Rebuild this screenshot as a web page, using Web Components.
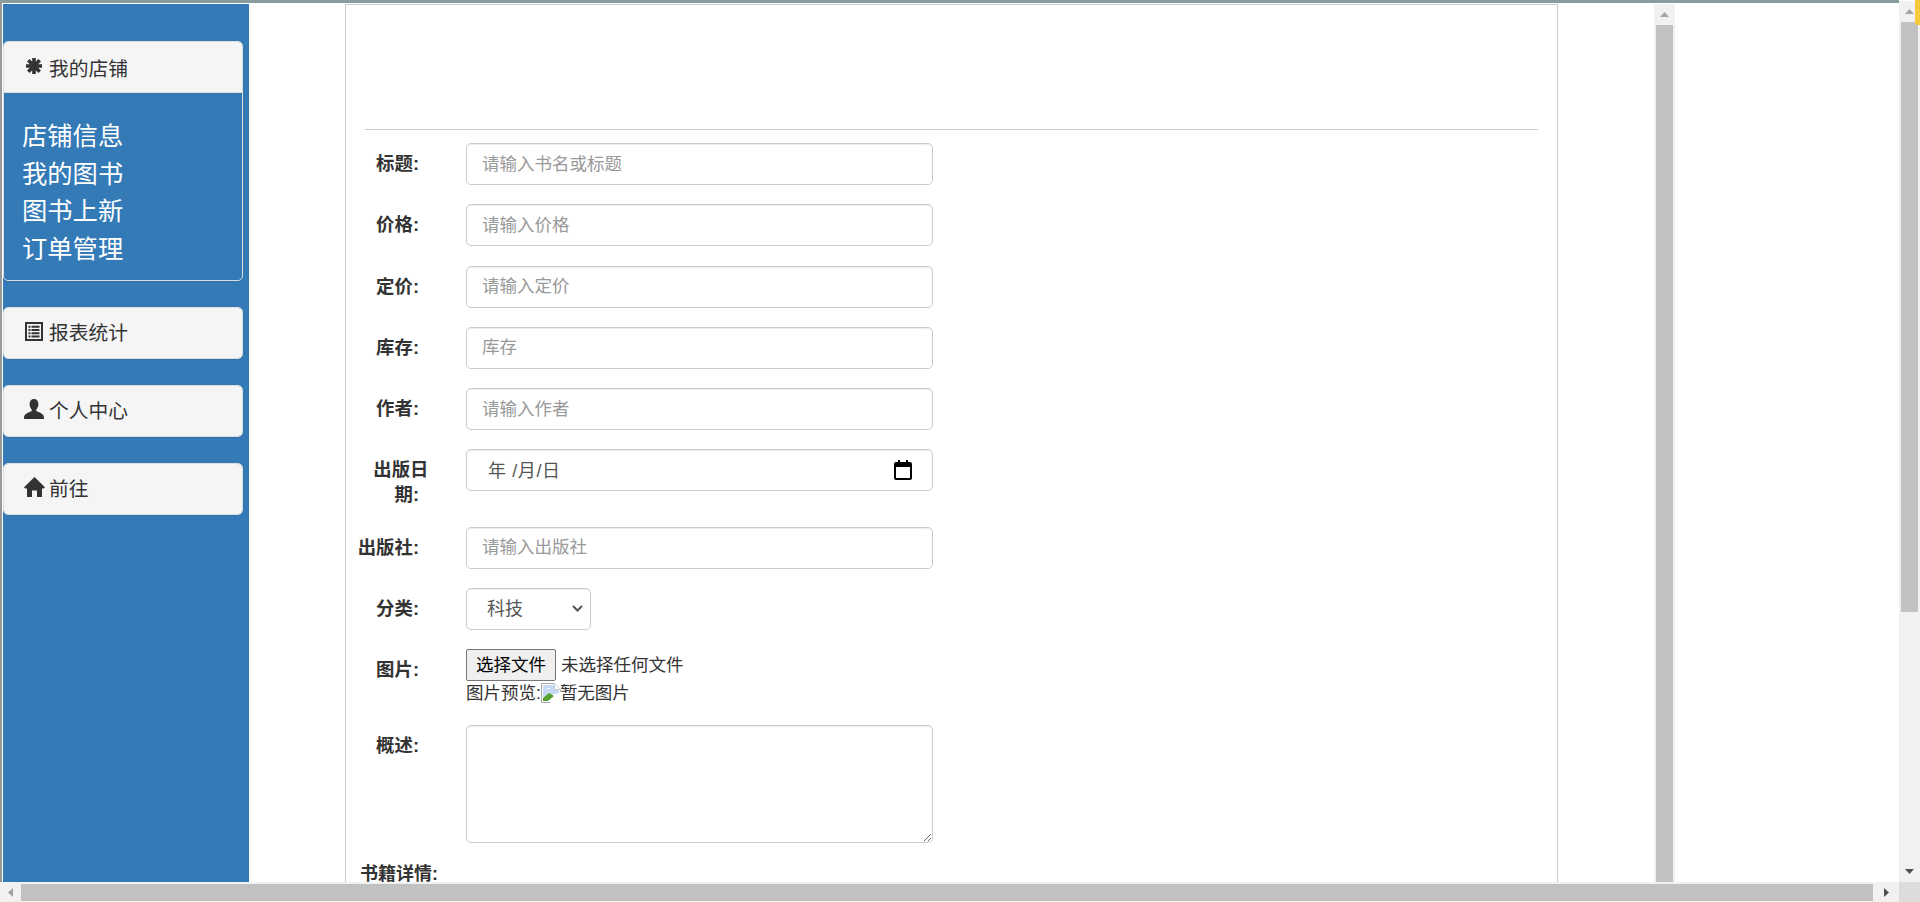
<!DOCTYPE html>
<html lang="zh-CN">
<head>
<meta charset="utf-8">
<title>图书上新</title>
<style>
  html, body { margin: 0; height: 100%; overflow: hidden; background: #fff; }
  body { font-family: "Liberation Sans", "Noto Sans CJK SC", sans-serif; color: #333; }
</style>
</head>
<body>
<shop-page>
  <side-nav slot="nav">
    <nav-card heading="我的店铺" icon="asterisk" open>
      <div>店铺信息</div>
      <div>我的图书</div>
      <div>图书上新</div>
      <div>订单管理</div>
    </nav-card>
    <nav-card heading="报表统计" icon="list"></nav-card>
    <nav-card heading="个人中心" icon="user"></nav-card>
    <nav-card heading="前往" icon="home"></nav-card>
  </side-nav>
  <book-form slot="panel"></book-form>
</shop-page>

<script>
const ICONS = {
  asterisk: `<svg viewBox="0 0 16 16" width="16" height="16"><g stroke="#333" stroke-width="3.600"><path d="M8 0v16M0 8h16M2.300 2.300l11.400 11.400M2.300 13.700L13.700 2.300"/></g></svg>`,
  list: `<svg viewBox="0 0 18 19" width="18" height="19"><path fill="#333" fill-rule="evenodd" d="M0 0h18v19H0zM2 2v15h14V2z"/><path fill="#333" d="M3.500 3.800h2v2h-2zM6.500 3.800h8v2h-8zM3.500 7h2v2h-2zM6.500 7h8v2h-8zM3.500 10.200h2v2h-2zM6.500 10.200h8v2h-8zM3.500 13.400h2v2h-2zM6.500 13.400h8v2h-8z"/></svg>`,
  user: `<svg viewBox="0 0 20 20" width="20" height="20"><path fill="#333" d="M10 0c2.800 0 4.400 2 4.400 5 0 2.300-.8 4.200-1.900 5.300-.5.5-.5 1.500.2 2 1.700 1 5.500 1.900 6.800 4.200.4.800.5 1.500.5 3.500H0c0-2 .1-2.700.5-3.500 1.300-2.300 5.100-3.200 6.800-4.200.7-.5.7-1.500.2-2C6.400 9.200 5.600 7.300 5.600 5 5.600 2 7.200 0 10 0z"/></svg>`,
  home: `<svg viewBox="0 0 21 20" width="21" height="20"><path fill="#333" d="M10.500 0l10.500 10.200-1.300 1.300H18V20h-5v-6.500H8V20H3v-8.500H1.300L0 10.200z"/></svg>`
};

class ShopPage extends HTMLElement {
  constructor() {
    super();
    const shadowRoot = this.attachShadow({ mode: 'open' });
    shadowRoot.innerHTML = `
      <style>
        :host { display: flex; flex-direction: column; width: 1920px; height: 902px; overflow: hidden; position: relative; }
        .upper { display: flex; flex: 1; min-height: 0; }
        .left { flex: 1; min-width: 0; display: flex; flex-direction: column; }
        .strip { height: 3px; background: #8b9c9f; flex: none; }
        .body { flex: 1; min-height: 0; display: flex; padding-top: 1px; }
        .edge { width: 2px; background: #999; margin-top: -1px; margin-right: 1px; flex: none; }
        .nav { width: 246px; flex: none; display: flex; }
        .panel { width: 1213px; margin-left: 96px; flex: none; display: flex; min-height: 0; }
        .inner-bar { margin-left: 96px; flex: none; display: flex; }
        .outer-bar { margin-top: 1px; flex: none; display: flex; }
        .tab { position: absolute; right: 0; top: 0; width: 5px; height: 25px; background: #f5c93a; border-bottom-left-radius: 3px; }
      </style>
      <div class="upper">
        <div class="left">
          <div class="strip"></div>
          <div class="body">
            <div class="edge"></div>
            <div class="nav"><slot name="nav"></slot></div>
            <div class="panel"><slot name="panel"></slot></div>
            <div class="inner-bar"><scroll-bar thumb-end="100"></scroll-bar></div>
          </div>
        </div>
        <div class="outer-bar"><scroll-bar thumb-end="590"></scroll-bar></div>
      </div>
      <scroll-bar-h></scroll-bar-h>
      <div class="tab"></div>
    `;
  }
}

class ScrollBar extends HTMLElement {
  constructor() {
    super();
    const shadowRoot = this.attachShadow({ mode: 'open' });
    shadowRoot.innerHTML = `
      <style>
        :host { display: flex; flex-direction: column; width: 21px; background: #f1f1f1; }
        .btn { height: 21px; flex: none; display: flex; align-items: center; justify-content: center; }
        .track { flex: 1; min-height: 0; padding: 0 2px; display: flex; flex-direction: column; }
        .thumb { background: #c1c1c1; }
        svg { display: block; }
      </style>
      <div class="btn"><svg width="9" height="5" viewBox="0 0 9 5"><path fill="#a3a3a3" d="M4.500 0L9 5H0z"/></svg></div>
      <div class="track"><div class="thumb"></div></div>
      <div class="btn last"><svg width="9" height="5" viewBox="0 0 9 5"><path fill="#505050" d="M0 0h9L4.500 5z"/></svg></div>
    `;
  }

  connectedCallback() {
    const thumb = this.shadowRoot.querySelector('.thumb');
    const end = this.getAttribute('thumb-end');
    if (end === '100') {
      thumb.style.flex = '1';
      this.shadowRoot.querySelector('.last').style.display = 'none';
    } else {
      thumb.style.height = `${end}px`;
    }
  }
}

class ScrollBarH extends HTMLElement {
  constructor() {
    super();
    const shadowRoot = this.attachShadow({ mode: 'open' });
    shadowRoot.innerHTML = `
      <style>
        :host { display: flex; height: 20px; flex: none; background: #f1f1f1; }
        .btn { width: 21px; flex: none; display: flex; align-items: center; justify-content: center; }
        .track { width: 1852px; flex: none; padding: 2px 0 1px; display: flex; box-sizing: border-box; }
        .thumb { flex: 1; background: #c1c1c1; }
        .right { width: 26px; }
        .corner { flex: 1; background: #dcdcdc; }
        svg { display: block; }
      </style>
      <div class="btn"><svg width="5" height="9" viewBox="0 0 5 9"><path fill="#a3a3a3" d="M5 0v9L0 4.500z"/></svg></div>
      <div class="track"><div class="thumb"></div></div>
      <div class="btn right"><svg width="5" height="9" viewBox="0 0 5 9"><path fill="#505050" d="M0 0l5 4.500L0 9z"/></svg></div>
      <div class="corner"></div>
    `;
  }
}

class SideNav extends HTMLElement {
  constructor() {
    super();
    const shadowRoot = this.attachShadow({ mode: 'open' });
    shadowRoot.innerHTML = `
      <style>
        :host { display: flex; flex-direction: column; gap: 25.700px; box-sizing: border-box; width: 246px; height: 100%; padding: 37px 6px 0 0; background: #337ab7; }
      </style>
      <slot></slot>
    `;
  }
}

class NavCard extends HTMLElement {
  constructor() {
    super();
    const shadowRoot = this.attachShadow({ mode: 'open' });
    shadowRoot.innerHTML = `
      <style>
        :host { display: block; border: 1px solid #ddd; border-radius: 5px; box-shadow: 0 1px 1px rgba(0, 0, 0, .05); overflow: hidden; }
        .heading { display: flex; align-items: center; box-sizing: border-box; height: 50px; padding-left: 20px; background: #f5f5f5; color: #333; font-size: 19.800px; }
        :host(:not([open])) .heading { padding-bottom: 3px; }
        .icon { width: 20px; height: 20px; display: flex; align-items: center; justify-content: center; margin-right: 5px; margin-top: -2px; }
        :host(:not([open])) .icon { margin-top: 0; }
        .body { display: none; padding: 25.300px 0 12.200px 18px; color: #fff; font-size: 25.300px; line-height: 37.500px; border-top: 1px solid #ddd; }
        :host([open]) .body { display: block; }
        svg { display: block; flex: none; }
      </style>
      <div class="heading"><span class="icon"></span><span class="text"></span></div>
      <div class="body"><slot></slot></div>
    `;
  }

  connectedCallback() {
    this.shadowRoot.querySelector('.text').textContent = this.getAttribute('heading');
    this.shadowRoot.querySelector('.icon').innerHTML = ICONS[this.getAttribute('icon')];
  }
}

class FormRow extends HTMLElement {
  constructor() {
    super();
    const shadowRoot = this.attachShadow({ mode: 'open' });
    shadowRoot.innerHTML = `
      <style>
        :host { display: flex; align-items: flex-start; margin-bottom: 19.250px; }
        .label { width: 73px; flex: none; font-size: 18.400px; font-weight: bold; line-height: 25px; padding-top: 8px; text-align: right; white-space: nowrap; }
        .field { margin-left: 47px; width: 467px; flex: none; }
      </style>
      <div class="label"><slot name="label"></slot></div>
      <div class="field"><slot></slot></div>
    `;
  }
}

class BookForm extends HTMLElement {
  constructor() {
    super();
    const shadowRoot = this.attachShadow({ mode: 'open' });
    shadowRoot.innerHTML = `
      <style>
        :host { display: block; box-sizing: border-box; width: 1213px; height: 100%; overflow: hidden; border: 1px solid #ccc; border-bottom: 0; font-size: 17.500px; line-height: 25px; color: #333; }
        .top { height: 124px; margin: 0 19px 13px; border-bottom: 1px solid #ccc; }
        form { margin: 0; }
        .control { display: block; box-sizing: border-box; width: 467px; height: 42px; padding: 8px 15px; border: 1px solid #ccc; border-radius: 5px; box-shadow: inset 0 1px 1px rgba(0, 0, 0, .075); background: #fff; font: 17.500px "Liberation Sans", "Noto Sans CJK SC", sans-serif; color: #555; outline: 0; }
        .control::placeholder { color: #999; opacity: 1; }
        .date { display: flex; align-items: center; justify-content: space-between; padding: 0 20px 3px 21px; font-size: 18px; letter-spacing: .6px; }
        .date svg { margin-top: 3px; }
        select.control { width: 125px; padding: 0 0 0 20px; font-size: 18px; appearance: none; background: #fff url("data:image/svg+xml,%3Csvg xmlns='http://www.w3.org/2000/svg' width='11' height='7'%3E%3Cpath fill='none' stroke='%23555' stroke-width='2' d='M1 1l4.500 4.500L10 1'/%3E%3C/svg%3E") no-repeat right 7px center; }
        textarea.control { height: 118px; resize: both; }
        .line { display: block; }
        .over { display: block; margin-right: -9.500px; }
        .file { display: flex; align-items: center; height: 32px; gap: 5px; }
        button { box-sizing: border-box; width: 90px; height: 32px; padding: 0 0 3px; border: 1px solid #767676; border-radius: 2px; background: #efefef; color: #000; font: 17.500px "Liberation Sans", "Noto Sans CJK SC", sans-serif; }
        .preview { display: flex; align-items: center; height: 24.500px; }
        .preview svg { display: block; flex: none; margin: 0 -1px 1px 0; }
        .details { font-size: 18px; font-weight: bold; line-height: 16px; margin: 22.750px 0 0 14px; }
      </style>
      <div class="top"></div>
      <form>
        <form-row><span slot="label">标题:</span><input class="control" placeholder="请输入书名或标题"></form-row>
        <form-row><span slot="label">价格:</span><input class="control" placeholder="请输入价格"></form-row>
        <form-row><span slot="label">定价:</span><input class="control" placeholder="请输入定价"></form-row>
        <form-row><span slot="label">库存:</span><input class="control" placeholder="库存"></form-row>
        <form-row><span slot="label">作者:</span><input class="control" placeholder="请输入作者"></form-row>
        <form-row>
          <span slot="label"><span class="over">出版日</span><span class="line">期:</span></span>
          <div class="control date"><span>年 /月/日</span>
            <svg width="18" height="20" viewBox="0 0 18 20"><path fill="#000" fill-rule="evenodd" d="M4 0h2v2h6V0h2v2h2a2 2 0 0 1 2 2v14a2 2 0 0 1-2 2H2a2 2 0 0 1-2-2V4a2 2 0 0 1 2-2h2zM2 7v11h14V7z"/></svg>
          </div>
        </form-row>
        <form-row><span slot="label">出版社:</span><input class="control" placeholder="请输入出版社"></form-row>
        <form-row><span slot="label">分类:</span><select class="control"><option>科技</option></select></form-row>
        <form-row>
          <span slot="label">图片:</span>
          <div class="file"><button type="button">选择文件</button><span>未选择任何文件</span></div>
          <div class="preview"><span>图片预览:</span>
            <svg width="20" height="20" viewBox="0 0 20 20"><path fill="#fff" stroke="#a8a8a8" d="M.5.500h13l6 6v13H.5z"/><path fill="#fff" stroke="#c8c8c8" d="M13.500.500v6h6"/><path fill="#c5d9f5" d="M2 2h11v5h5v3L2 14z"/><path fill="#fff" d="M5 6c1-1.500 3-1.500 4 0z"/><path fill="#57a332" d="M2 18v-3l6-5 5 3-6 5z"/><path fill="#fff" d="M9 20l11-12v12z"/></svg>
            <span>暂无图片</span>
          </div>
        </form-row>
        <form-row><span slot="label">概述:</span><textarea class="control"></textarea></form-row>
        <div class="details">书籍详情:</div>
      </form>
    `;
  }
}

window.customElements.define('shop-page', ShopPage);
window.customElements.define('scroll-bar', ScrollBar);
window.customElements.define('scroll-bar-h', ScrollBarH);
window.customElements.define('side-nav', SideNav);
window.customElements.define('nav-card', NavCard);
window.customElements.define('form-row', FormRow);
window.customElements.define('book-form', BookForm);
</script>
</body>
</html>
